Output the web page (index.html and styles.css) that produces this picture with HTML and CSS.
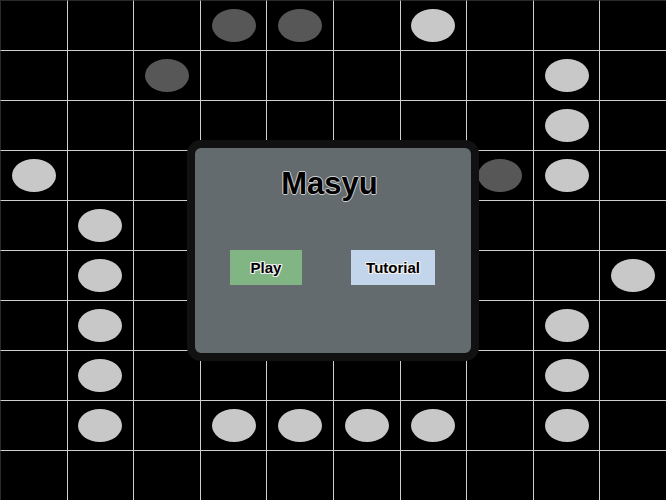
FILE: index.html
```html
<!DOCTYPE html>
<html>
<head>
<meta charset="utf-8">
<title>Masyu</title>
<link rel="stylesheet" href="styles.css">
</head>
<body>
<div class="board">
  <div class="cell"></div><div class="cell"></div><div class="cell"></div><div class="cell"><span class="pearl dark"></span></div><div class="cell"><span class="pearl dark"></span></div><div class="cell"></div><div class="cell"><span class="pearl light"></span></div><div class="cell"></div><div class="cell"></div><div class="cell"></div>
  <div class="cell"></div><div class="cell"></div><div class="cell"><span class="pearl dark"></span></div><div class="cell"></div><div class="cell"></div><div class="cell"></div><div class="cell"></div><div class="cell"></div><div class="cell"><span class="pearl light"></span></div><div class="cell"></div>
  <div class="cell"></div><div class="cell"></div><div class="cell"></div><div class="cell"></div><div class="cell"></div><div class="cell"></div><div class="cell"></div><div class="cell"></div><div class="cell"><span class="pearl light"></span></div><div class="cell"></div>
  <div class="cell"><span class="pearl light"></span></div><div class="cell"></div><div class="cell"></div><div class="cell"></div><div class="cell"></div><div class="cell"></div><div class="cell"></div><div class="cell"><span class="pearl dark"></span></div><div class="cell"><span class="pearl light"></span></div><div class="cell"></div>
  <div class="cell"></div><div class="cell"><span class="pearl light"></span></div><div class="cell"></div><div class="cell"></div><div class="cell"></div><div class="cell"></div><div class="cell"></div><div class="cell"></div><div class="cell"></div><div class="cell"></div>
  <div class="cell"></div><div class="cell"><span class="pearl light"></span></div><div class="cell"></div><div class="cell"></div><div class="cell"></div><div class="cell"></div><div class="cell"></div><div class="cell"></div><div class="cell"></div><div class="cell"><span class="pearl light"></span></div>
  <div class="cell"></div><div class="cell"><span class="pearl light"></span></div><div class="cell"></div><div class="cell"></div><div class="cell"></div><div class="cell"></div><div class="cell"></div><div class="cell"></div><div class="cell"><span class="pearl light"></span></div><div class="cell"></div>
  <div class="cell"></div><div class="cell"><span class="pearl light"></span></div><div class="cell"></div><div class="cell"></div><div class="cell"></div><div class="cell"></div><div class="cell"></div><div class="cell"></div><div class="cell"><span class="pearl light"></span></div><div class="cell"></div>
  <div class="cell"></div><div class="cell"><span class="pearl light"></span></div><div class="cell"></div><div class="cell"><span class="pearl light"></span></div><div class="cell"><span class="pearl light"></span></div><div class="cell"><span class="pearl light"></span></div><div class="cell"><span class="pearl light"></span></div><div class="cell"></div><div class="cell"><span class="pearl light"></span></div><div class="cell"></div>
  <div class="cell"></div><div class="cell"></div><div class="cell"></div><div class="cell"></div><div class="cell"></div><div class="cell"></div><div class="cell"></div><div class="cell"></div><div class="cell"></div><div class="cell"></div>
</div>
<div class="overlay">
  <div class="dialog">
    <h1 class="title">Masyu</h1>
    <div class="actions">
      <button class="btn btn-play">Play</button>
      <button class="btn btn-tutorial">Tutorial</button>
    </div>
  </div>
</div>
</body>
</html>
```
FILE: styles.css
```css
html, body {
  margin: 0;
  padding: 0;
  background: #000;
  width: 666px;
  height: 500px;
  overflow: hidden;
  font-family: "Liberation Sans", Arial, sans-serif;
}

.board {
  display: grid;
  grid-template-columns: repeat(10, 1fr);
  grid-template-rows: repeat(10, 50px);
  width: 666px;
  height: 500px;
}

.cell {
  box-sizing: border-box;
  border-left: 1px solid #cfcfcf;
  border-top: 1px solid #cfcfcf;
  display: flex;
  align-items: center;
  justify-content: center;
}

.cell:nth-child(10n+1) {
  border-left-color: #2a2a2a;
}

.cell:nth-child(-n+10) {
  border-top-color: #2a2a2a;
}

.pearl {
  width: 44px;
  height: 33px;
  border-radius: 50%;
}

.pearl.dark {
  background: #575757;
}

.pearl.light {
  background: #c8c8c8;
}

.overlay {
  position: fixed;
  inset: 0;
  display: flex;
  align-items: center;
  justify-content: center;
}

.dialog {
  width: 276px;
  height: 187px;
  background: #636b6e;
  border: 8px solid #111;
  border-radius: 14px;
  padding-top: 18px;
  box-sizing: content-box;
  display: flex;
  flex-direction: column;
  align-items: stretch;
}

.title {
  margin: 0;
  padding-right: 7px;
  text-align: center;
  font-size: 31px;
  font-weight: bold;
  color: #000;
  text-shadow: 1px 0 #cfcfcf, -1px 0 #cfcfcf, 0 1px #cfcfcf, 0 -1px #cfcfcf;
}

.actions {
  display: flex;
  justify-content: space-between;
  padding: 0 36px 0 35px;
  margin-top: 48px;
}

.btn {
  height: 35px;
  min-width: 72px;
  padding: 0 15px;
  border: none;
  border-radius: 0;
  font-family: "Liberation Sans", Arial, sans-serif;
  font-size: 15px;
  font-weight: bold;
  color: #000;
  display: flex;
  align-items: center;
  justify-content: center;
  text-shadow: 1px 0 #f0f0f0, -1px 0 #f0f0f0, 0 1px #f0f0f0, 0 -1px #f0f0f0,
    1px 1px #f0f0f0, -1px -1px #f0f0f0, 1px -1px #f0f0f0, -1px 1px #f0f0f0;
}

.btn-play {
  background: #82b584;
}

.btn-tutorial {
  background: #c2d5ea;
}
```
